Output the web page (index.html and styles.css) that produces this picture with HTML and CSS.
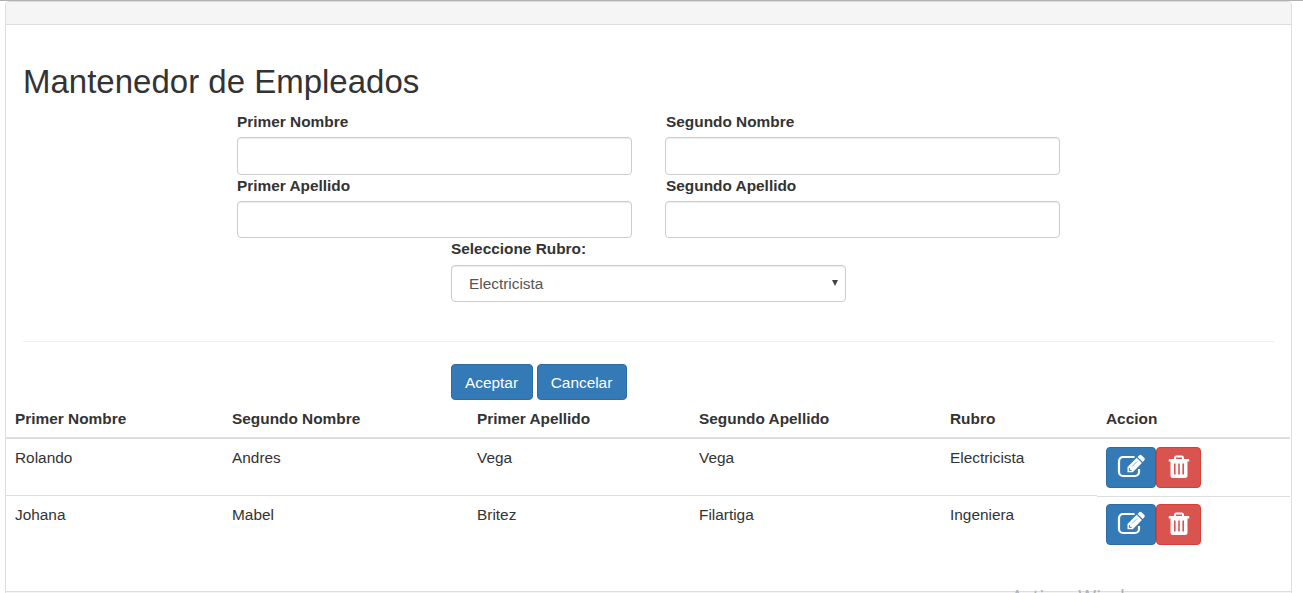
FILE: index.html
```html
<!DOCTYPE html>
<html lang="es">
<head>
<meta charset="utf-8">
<title>Mantenedor de Empleados</title>
<link rel="stylesheet" href="styles.css">
</head>
<body>
<svg class="sprite" aria-hidden="true">
  <symbol id="edit" viewBox="0 0 28 24">
    <path d="M17.500 3H6a4 4 0 0 0-4 4v11a4 4 0 0 0 4 4h12a4 4 0 0 0 4-4v-3" fill="none" stroke="currentColor" stroke-width="2.200"/>
    <path d="M10.500 13 19.700 3.800l5.200 5.200L15.700 18.200H10.500z" fill="currentColor"/>
    <path d="M20.600 2.900 22.300 1.200q1.100-1.100 2.200 0L27.300 4q1.100 1.100 0 2.200L25.800 8.100z" fill="currentColor"/>
    <path d="M12.400 14.200v2.200h2.200" fill="none" stroke="#337ab7" stroke-width="1"/>
    <path d="M15.200 12.400l5-5" fill="none" stroke="#337ab7" stroke-width=".6"/>
  </symbol>
  <symbol id="trash" viewBox="0 0 22 24">
    <path d="M7 4V2.800Q7 1.500 8.300 1.500h5.400Q15 1.500 15 2.800V4" fill="none" stroke="currentColor" stroke-width="2"/>
    <path d="M1.500 4h19q.8 0 .8.800v1.700H.7V4.800q0-.8.800-.8z" fill="currentColor"/>
    <path fill-rule="evenodd" d="M2.500 6h17v14.500q0 2.500-2.500 2.500H5q-2.500 0-2.500-2.500zM6 8.500v11h1.600v-11zm4.200 0v11h1.600v-11zm4.200 0v11H16v-11z" fill="currentColor"/>
  </symbol>
</svg>
<main class="panel">
  <header class="panel-heading"></header>
  <form class="panel-body">
    <h2>Mantenedor de Empleados</h2>
    <div class="fields">
      <div class="field"><label for="n1">Primer Nombre</label><input id="n1" type="text"></div>
      <div class="field"><label for="n2">Segundo Nombre</label><input id="n2" type="text"></div>
      <div class="field"><label for="a1">Primer Apellido</label><input id="a1" type="text"></div>
      <div class="field"><label for="a2">Segundo Apellido</label><input id="a2" type="text"></div>
    </div>
    <div class="field rubro">
      <label for="r">Seleccione Rubro:</label>
      <div class="select" id="r"><span>Electricista</span><svg class="caret" viewBox="0 0 6 6"><path d="M0 0h6L3 6z"/></svg></div>
    </div>
    <hr>
    <div class="buttons"><button type="button" class="btn accept">Aceptar</button><button type="button" class="btn cancel">Cancelar</button></div>
  </form>
  <table>
    <colgroup><col class="c1"><col class="c2"><col class="c3"><col class="c4"><col class="c5"><col></colgroup>
    <thead><tr><th>Primer Nombre</th><th>Segundo Nombre</th><th>Primer Apellido</th><th>Segundo Apellido</th><th>Rubro</th><th>Accion</th></tr></thead>
    <tbody>
      <tr><td>Rolando</td><td>Andres</td><td>Vega</td><td>Vega</td><td>Electricista</td><td><div class="actions"><button class="act edit"><svg><use href="#edit"/></svg></button><button class="act trash"><svg><use href="#trash"/></svg></button></div></td></tr>
      <tr><td>Johana</td><td>Mabel</td><td>Britez</td><td>Filartiga</td><td>Ingeniera</td><td><div class="actions"><button class="act edit"><svg><use href="#edit"/></svg></button><button class="act trash"><svg><use href="#trash"/></svg></button></div></td></tr>
    </tbody>
  </table>
  <footer class="panel-footer"></footer>
</main>
<div class="watermark">Activar Windows</div>
</body>
</html>
```
FILE: styles.css
```css
* { box-sizing: border-box; }
body {
  margin: 0;
  height: 593px;
  overflow: hidden;
  position: relative;
  border-top: 1px solid #b0b0b0;
  background: #fff;
  color: #333;
  font: 15.4px/22px "Liberation Sans", Arial, sans-serif;
}
.sprite { position: absolute; width: 0; height: 0; }
.panel {
  width: 1287px;
  height: 610px;
  margin-left: 5px;
  border: 1px solid #ddd;
  border-radius: 4px;
}
.panel-heading { height: 23px; background: #f5f5f5; border-bottom: 1px solid #ddd; border-radius: 3px 3px 0 0; }
.panel-body { height: 375px; padding: 39px 17px 0; }
h2 { margin: 0 0 10px; font-size: 33px; line-height: 36px; font-weight: 500; }
.fields {
  display: grid;
  grid-template-columns: 395px 395px;
  column-gap: 33px;
  margin-left: 214px;
}
.field { height: 64px; display: flex; flex-direction: column; }
.field:nth-child(n+3) { height: 63px; }
label { height: 22px; margin-bottom: 5px; line-height: 24px; font-weight: 700; flex: none; }
input, .select {
  width: 395px;
  height: 37px;
  flex: none;
  border: 1px solid #ccc;
  border-radius: 4px;
  background: #fff;
  box-shadow: inset 0 1px 1px rgba(0,0,0,.075);
}
.field:nth-child(-n+2) input { height: 38px; }
.field:nth-child(2n) label { padding-left: 1px; }
.field.rubro { height: 64px; margin-left: 428px; }
.rubro label { margin-bottom: 6px; }
.select { display: flex; align-items: center; justify-content: space-between; padding: 1px 7px 0 17px; color: #555; }
.caret { width: 6px; height: 6px; fill: #444; margin-top: -3px; }
hr { height: 1px; margin: 40px 0 22px; border: 0; background: #eee; }
.buttons { display: flex; gap: 4px; margin-left: 428px; }
.btn {
  height: 36px;
  padding: 2px 1px 0 0;
  border: 1px solid #2e6da4;
  border-radius: 4px;
  background: #337ab7;
  color: #fff;
  font: inherit;
}
.accept { width: 82px; }
.cancel { width: 90px; }
table { width: 1284px; table-layout: fixed; border-collapse: separate; border-spacing: 0; }
.c1 { width: 217px; }
.c2 { width: 245px; }
.c3 { width: 222px; }
.c4 { width: 251px; }
.c5 { width: 156px; }
th, td { padding: 8px 9px 0; text-align: left; vertical-align: top; }
th { height: 39px; border-bottom: 2px solid #ddd; }
td { height: 57px; }
tbody tr:first-child td:not(:last-child) { border-bottom: 1px solid #ddd; }
tbody tr:last-child td:last-child { border-top: 1px solid #ddd; padding-top: 7px; }
.actions { display: flex; }
.act { height: 41px; padding: 0; border: 1px solid; border-radius: 4px; color: #fff; display: flex; align-items: center; justify-content: center; }
.act.edit { width: 50px; background: #337ab7; border-color: #2e6da4; }
.act.trash { width: 45px; background: #d9534f; border-color: #d43f3a; }
.edit svg { width: 28px; height: 24px; margin-top: -3px; }
.trash svg { width: 22px; height: 24px; margin-top: -2px; }
.panel-footer { height: 30px; margin-top: 38px; border-top: 1px solid #ddd; background: #f5f5f5; }
.watermark { position: absolute; left: 1011px; top: 583px; color: #b0b0b0; font: 19.5px/26px "Open Sans", sans-serif; white-space: nowrap; }
```
